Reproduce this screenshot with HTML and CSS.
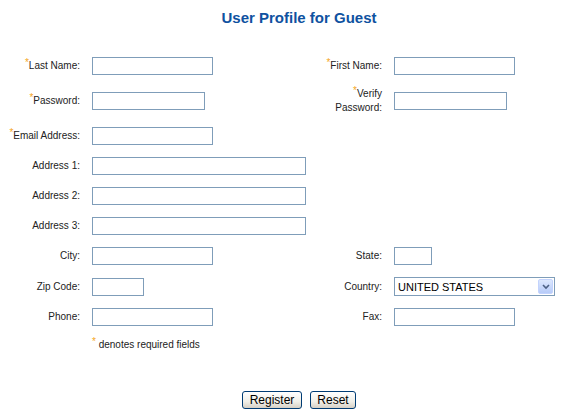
FILE: index.html
```html
<!DOCTYPE html>
<html lang="en">
  <head>
    <meta charset="UTF-8" />
    <title>User Profile for Guest</title>
    <link rel="stylesheet" href="styles.css">
  </head>
  <body>
    <h1 class="title">User Profile for Guest</h1>

    <!-- Form profil -->
    <form class="profile">
      <label class="lbl"><span class="req">*</span>Last Name:</label>
      <input type="text" class="field w121" />
      <label class="lbl lbl-right"><span class="req">*</span>First Name:</label>
      <input type="text" class="field w121" />

      <label class="lbl"><span class="req">*</span>Password:</label>
      <input type="password" class="field w113" />
      <label class="lbl lbl-right"><span class="req">*</span>Verify Password:</label>
      <input type="password" class="field w113" />

      <label class="lbl"><span class="req">*</span>Email Address:</label>
      <input type="text" class="field w121" />

      <label class="lbl">Address 1:</label>
      <input type="text" class="field w214" />

      <label class="lbl">Address 2:</label>
      <input type="text" class="field w214" />

      <label class="lbl">Address 3:</label>
      <input type="text" class="field w214" />

      <label class="lbl">City:</label>
      <input type="text" class="field w121" />
      <label class="lbl lbl-right">State:</label>
      <input type="text" class="field w38" />

      <label class="lbl">Zip Code:</label>
      <input type="text" class="field w52" />
      <label class="lbl lbl-right">Country:</label>
      <div class="select">
        <select>
          <option>UNITED STATES</option>
        </select>
        <span class="arrow">
          <svg width="8" height="6" viewBox="0 0 8 6">
            <path d="M1 1 L4 4 L7 1" fill="none" stroke="#4d6185" stroke-width="1.6" />
          </svg>
        </span>
      </div>

      <label class="lbl">Phone:</label>
      <input type="text" class="field w121" />
      <label class="lbl lbl-right">Fax:</label>
      <input type="text" class="field w121" />

      <p class="note"><span class="req">*</span> denotes required fields</p>
    </form>

    <div class="actions">
      <button type="button" class="btn btn-register">Register</button>
      <button type="reset" class="btn btn-reset">Reset</button>
    </div>
  </body>
</html>
```

FILE: styles.css
```css
/* Umum */
body {
  margin: 0;
  font-family: "Liberation Sans", Arial, sans-serif;
  font-size: 10px;
  color: #222;
  background-color: #fff;
}

.title {
  margin: 9px 0 0 18px;
  text-align: center;
  font-size: 15px;
  line-height: 17px;
  font-weight: bold;
  color: #0f52a0;
}

/* Grid form */
.profile {
  display: grid;
  grid-template-columns: 80px 216px 62px 170px;
  column-gap: 12px;
  row-gap: 12px;
  align-items: center;
  justify-items: start;
  margin-top: 31px;
}

.lbl {
  grid-column: 1;
  justify-self: end;
  text-align: right;
  line-height: 14px;
}

.lbl-right {
  grid-column: 3;
}

.req {
  color: #f5a623;
  vertical-align: 3px;
  line-height: 0;
}

.field {
  box-sizing: border-box;
  height: 18px;
  margin: 0;
  padding: 0 3px;
  border: 1px solid #7f9db9;
  background-color: #fff;
  font-family: "Liberation Sans", Arial, sans-serif;
  font-size: 11px;
}

.w121 { width: 121px; }
.w113 { width: 113px; }
.w214 { width: 214px; }
.w52 { width: 52px; }
.w38 { width: 38px; }

/* Dropdown negara */
.select {
  position: relative;
  width: 161px;
  height: 19px;
}

.select select {
  box-sizing: border-box;
  width: 100%;
  height: 19px;
  margin: 0;
  padding: 0 3px;
  border: 1px solid #7f9db9;
  background-color: #fff;
  appearance: none;
  -webkit-appearance: none;
  font-family: "Liberation Sans", Arial, sans-serif;
  font-size: 11px;
  color: #000;
}

.select .arrow {
  position: absolute;
  top: 2px;
  right: 2px;
  box-sizing: border-box;
  width: 15px;
  height: 15px;
  border: 1px solid #c3d3fd;
  border-radius: 2px;
  background: linear-gradient(#dde8fe, #b7cbf8);
  display: flex;
  align-items: center;
  justify-content: center;
  pointer-events: none;
}

.note {
  grid-column: 2 / span 3;
  margin: 0;
  line-height: 14px;
}

/* Tombol */
.actions {
  display: flex;
  justify-content: center;
  gap: 8px;
  margin: 39px 0 0 18px;
}

.btn {
  box-sizing: border-box;
  height: 18px;
  padding: 0;
  border: 1px solid #003c74;
  border-radius: 3px;
  background: linear-gradient(#ffffff, #f0efe8 60%, #d6d0c5);
  font-family: "Liberation Sans", Arial, sans-serif;
  font-size: 12px;
  color: #000;
}

.btn-register { width: 60px; }
.btn-reset { width: 46px; }
```
